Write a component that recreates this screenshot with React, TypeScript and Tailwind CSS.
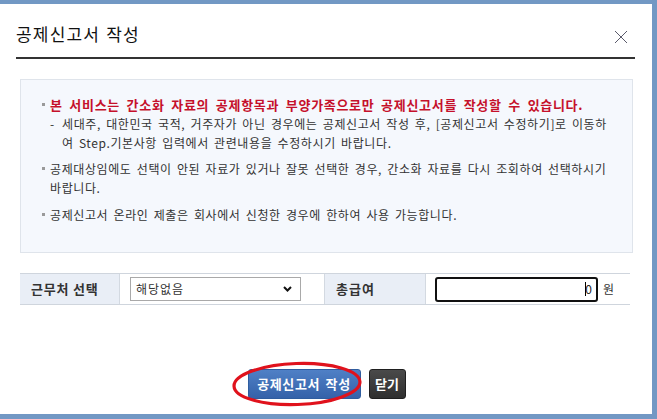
import React from "react";

const font = { fontFamily: '"Noto Sans CJK KR", "Noto Sans", sans-serif' };

function Bullet() {
  return (
    <span className="flex w-[8px] shrink-0 pt-[8px]">
      <span className="block h-[3px] w-[3px] bg-[#9a9a9a]" />
    </span>
  );
}

export default function App() {
  return (
    <div
      className="relative w-[657px] h-[419px] bg-[#7298c4] pt-[4px] pr-[5px] pb-[5px] overflow-hidden"
      style={font}
    >
      <div className="flex h-full w-full flex-col bg-white">
        {/* Header */}
        <div className="ml-[16px] mr-[17px] flex items-center justify-between border-b-2 border-[#333333] pt-[19px] pb-[13px]">
          <h1 className="text-[17px] leading-[20px] tracking-[1.2px] text-[#111111] [word-spacing:1px]">공제신고서 작성</h1>
          <svg width="14" height="14" viewBox="0 0 14 14" className="mr-[7px] mt-[7px]">
            <path d="M1 1 L13 13 M13 1 L1 13" stroke="#5a5a6a" strokeWidth="1" fill="none" />
          </svg>
        </div>

        {/* Info box */}
        <div className="ml-[20px] mr-[19px] mt-[20px] h-[174px] border border-[#dfe4eb] bg-[#f5f8fd] pl-[21px] pt-[15px] text-[12px] leading-[19px] tracking-[0.6px] text-[#333333]">
          <div className="flex">
            <Bullet />
            <div>
              <div className="text-[13px] font-bold tracking-[0.7px] text-[#c5102b] [word-spacing:3px]">
                본 서비스는 간소화 자료의 공제항목과 부양가족으로만 공제신고서를 작성할 수 있습니다.
              </div>
              <div className="flex">
                <span className="w-[12px] shrink-0">-</span>
                <span className="[word-spacing:2px]">
                  세대주, 대한민국 국적, 거주자가 아닌 경우에는 공제신고서 작성 후, [공제신고서 수정하기]로 이동하
                  <br />
                  여 Step.기본사항 입력에서 관련내용을 수정하시기 바랍니다.
                </span>
              </div>
            </div>
          </div>
          <div className="mt-[7px] flex">
            <Bullet />
            <div className="[word-spacing:2px]">
              공제대상임에도 선택이 안된 자료가 있거나 잘못 선택한 경우, 간소화 자료를 다시 조회하여 선택하시기
              <br />
              바랍니다.
            </div>
          </div>
          <div className="mt-[8px] flex">
            <Bullet />
            <div className="[word-spacing:2px]">
              공제신고서 온라인 제출은 회사에서 신청한 경우에 한하여 사용 가능합니다.
            </div>
          </div>
        </div>

        {/* Table row */}
        <div className="ml-[20px] mr-[22px] mt-[20px] flex h-[32px] border-y border-[#cfd5dd] text-[13px]">
          <div className="flex w-[100px] items-center border-r border-[#d3d9e1] bg-[#e9eef6] pl-[11px] font-bold tracking-[0.8px] text-[#333333]">
            근무처 선택
          </div>
          <div className="flex w-[205px] items-center border-r border-[#d3d9e1] pl-[10px]">
            <div className="flex h-[24px] w-[171px] items-center justify-between border border-[#a9a9a9] bg-white pl-[5px] pr-[8px] text-[12px] tracking-[1px] text-[#333333]">
              <span>해당없음</span>
              <svg width="9" height="6" viewBox="0 0 9 6">
                <path d="M1 1 L4.5 4.5 L8 1" stroke="#111" strokeWidth="2" fill="none" />
              </svg>
            </div>
          </div>
          <div className="flex w-[101px] items-center border-r border-[#d3d9e1] bg-[#e9eef6] pl-[11px] font-bold tracking-[1px] text-[#333333]">
            총급여
          </div>
          <div className="flex flex-1 items-center pl-[9px]">
            <div className="flex h-[25px] w-[163px] items-center justify-end rounded-[3px] border-2 border-[#111111] bg-white pr-[4px] text-[12px] text-[#222222]">
              <span className="relative">
                0
                <span className="absolute left-[0px] top-[2px] h-[14px] w-[1px] bg-black" />
              </span>
            </div>
            <span className="ml-[5px] text-[12px] text-[#333333]">원</span>
          </div>
        </div>

        {/* Buttons */}
        <div className="mt-[64px] flex justify-center gap-[8px] pl-[1px]">
          <button className="h-[30px] w-[113px] rounded-[3px] border border-[#2f5d9f] bg-gradient-to-b from-[#4f80c6] to-[#3562a9] text-[13px] font-bold tracking-[0.6px] text-white [word-spacing:2px]">
            공제신고서 작성
          </button>
          <button className="h-[30px] w-[37px] rounded-[3px] border border-[#1f1f1f] bg-gradient-to-b from-[#4a4a4a] to-[#2f2f2f] text-[13px] font-bold text-white">
            닫기
          </button>
        </div>
      </div>

      {/* Red annotation ellipse */}
      <svg className="pointer-events-none absolute left-[231px] top-[360px]" width="134" height="48" viewBox="0 0 134 48">
        <ellipse cx="66" cy="24" rx="63" ry="20.5" fill="none" stroke="#e0121c" strokeWidth="3.2" transform="rotate(-2 66 24)" />
      </svg>
    </div>
  );
}
